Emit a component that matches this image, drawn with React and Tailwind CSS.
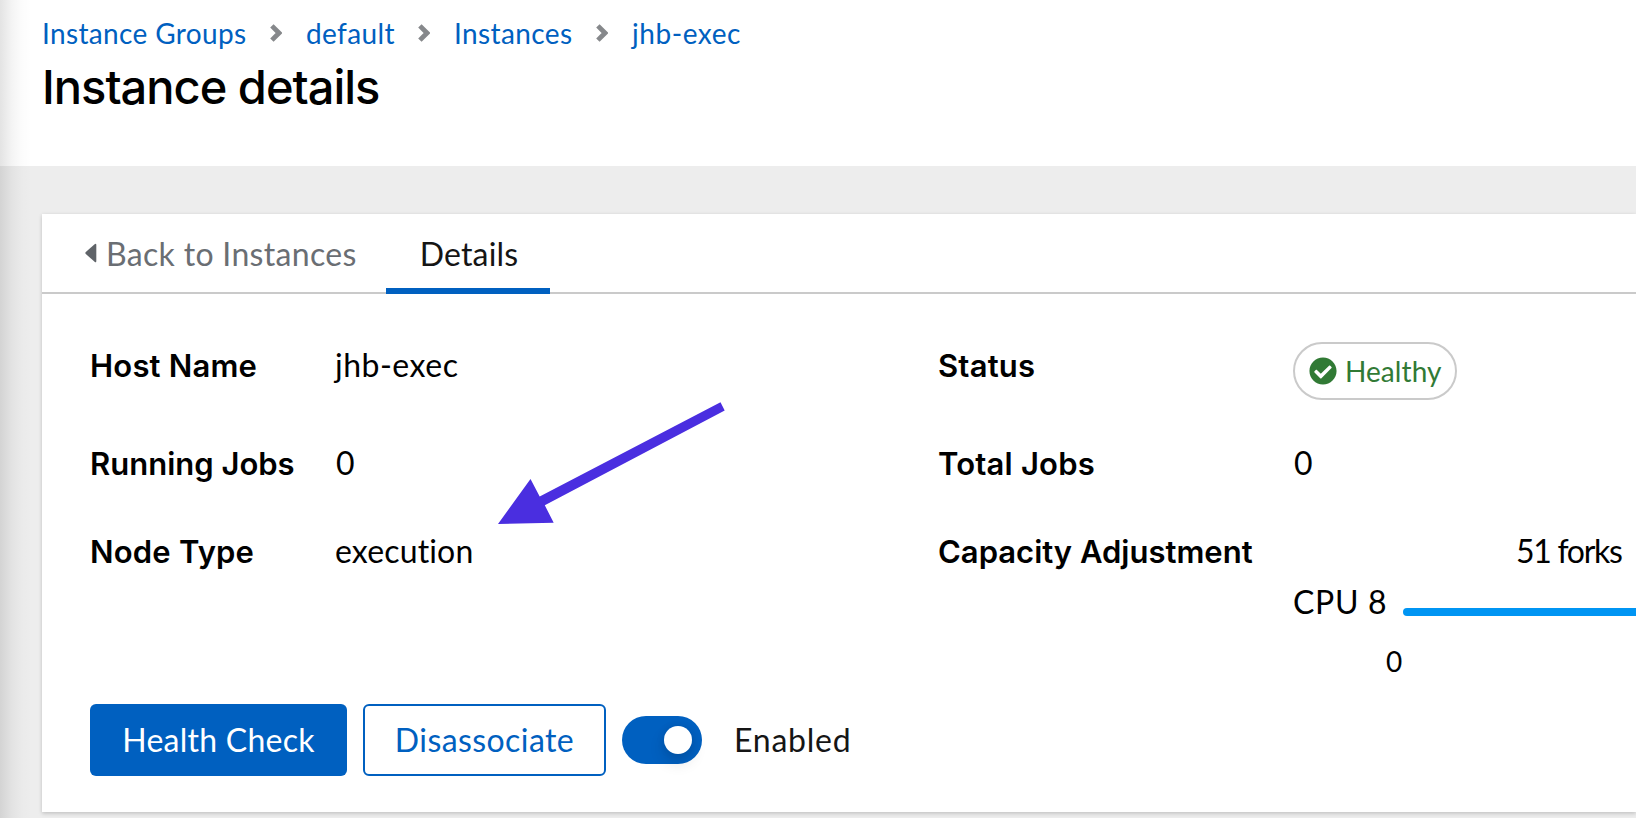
import React from 'react';

function Chevron() {
  return (
    <svg className="h-[18px] w-3 shrink-0" viewBox="0 0 12 18" fill="none">
      <path d="M1.900 1.900 9 9l-7.100 7.100" stroke="#86888b" strokeWidth="4.800" strokeLinejoin="miter" />
    </svg>
  );
}

function Breadcrumb() {
  return (
    <nav className="flex h-[42px] items-center text-[28px] leading-[42px] text-[#0060c0]">
      <a className="w-[228px] tracking-[0.35px]">Instance Groups</a>
      <Chevron />
      <a className="ml-6 w-[112px] tracking-[0.39px]">default</a>
      <Chevron />
      <a className="ml-6 w-[142px] tracking-[0.39px]">Instances</a>
      <Chevron />
      <a className="ml-6 tracking-[0.55px]">jhb-exec</a>
    </nav>
  );
}

function Label({ className = '', children }) {
  return (
    <dt className={`font-[Inter] text-[31px] leading-[48px] font-semibold whitespace-nowrap ${className}`}>
      {children}
    </dt>
  );
}

function Toggle() {
  return (
    <span className="ml-4 flex h-12 w-20 items-center justify-end rounded-full bg-[#0060c0] pr-2.5">
      <span className="h-7 w-7 rounded-full bg-white shadow-[0_8px_16px_0_rgba(3,3,3,0.14),0_0_8px_0_rgba(3,3,3,0.08)]" />
    </span>
  );
}

function Details() {
  return (
    <div className="grid grid-cols-[848px_1fr] pt-[47px] pl-12">
      <dl className="grid grid-cols-[245px_1fr] grid-rows-[98px_88px_177px] text-[32px] leading-[48px]">
        <div className="col-span-2 grid grid-cols-subgrid items-baseline">
          <Label className="tracking-[0.2px]">Host Name</Label>
          <dd className="tracking-[0.5px]">jhb-exec</dd>
        </div>
        <div className="col-span-2 grid grid-cols-subgrid items-baseline">
          <Label>Running Jobs</Label>
          <dd className="pl-px">0</dd>
        </div>
        <div className="col-span-2 grid grid-cols-subgrid items-baseline">
          <Label className="tracking-[0.2px]">Node Type</Label>
          <dd className="tracking-[0.15px]">execution</dd>
        </div>
      </dl>
      <dl className="grid grid-cols-[355px_1fr] grid-rows-[98px_88px_177px] text-[32px] leading-[48px]">
        <Label className="pt-px tracking-[0.2px]">Status</Label>
        <dd className="pt-px">
          <span className="flex h-[58px] w-[164px] items-center rounded-full border-2 border-[#cacaca] pl-3.5 text-[28px] tracking-[0.07px] text-[#317a35]">
            <svg className="mr-2 h-7 w-7 shrink-0" viewBox="0 0 512 512" fill="currentColor">
              <path d="M504 256c0 137-111 248-248 248S8 393 8 256 119 8 256 8s248 111 248 248zM227.300 387.300l184-184c6.200-6.200 6.200-16.400 0-22.600l-22.600-22.600c-6.200-6.200-16.400-6.200-22.600 0L216 308.100l-70.100-70.100c-6.200-6.200-16.400-6.200-22.600 0l-22.600 22.600c-6.200 6.200-6.200 16.400 0 22.600l104 104c6.200 6.300 16.400 6.300 22.600.1z" />
            </svg>
            Healthy
          </span>
        </dd>
        <Label className="pt-px tracking-[0.2px]">Total Jobs</Label>
        <dd className="pl-px">0</dd>
        <Label className="pt-px">Capacity Adjustment</Label>
        <dd>
          <div className="pl-[223px] tracking-[-1.3px] whitespace-nowrap">51 forks</div>
          <div className="mt-[3px] flex items-center">
            <span className="w-[110px] shrink-0 tracking-[0.67px] whitespace-nowrap">CPU 8</span>
            <span className="mt-5 h-2 w-full rounded-l-full bg-[#0095f3]" />
          </div>
          <div className="mt-3.5 pl-[93px] text-[28px] leading-[42px]">0</div>
        </dd>
      </dl>
    </div>
  );
}

export default function App() {
  return (
    <div className="relative flex h-[818px] w-[1636px] flex-col overflow-hidden bg-[#ededed] font-[Lato,sans-serif] text-black">
      <header className="h-[166px] shrink-0 bg-white pt-3 pl-[42px]">
        <Breadcrumb />
        <h1 className="mt-0.5 font-[Inter] text-[47px] leading-[62px] font-medium tracking-[-1px]">Instance details</h1>
      </header>
      <main className="pt-12 pl-[42px]">
        <section className="h-[598px] bg-white shadow-[0_2px_4px_rgba(3,3,3,0.14),0_0_4px_rgba(3,3,3,0.06)]">
          <div className="flex h-20 border-b-2 border-[#cacaca] text-[32px] leading-[48px]">
            <a className="flex w-[344px] items-start pt-[15px] pl-[43px] text-[#6a6e73]">
              <svg className="mt-[14px] mr-[9px] h-5 w-3 shrink-0" viewBox="0 0 12 20" fill="#5f6368">
                <path d="M11.300 2v16q0 2-1.700.7L.8 11Q-.2 10 .8 9l8.800-7.700Q11.300 0 11.300 2z" />
              </svg>
              <span className="pt-px tracking-[0.32px] whitespace-nowrap">Back to Instances</span>
            </a>
            <a className="h-20 w-[164px] border-b-6 border-[#0060c0] pt-4 pl-0.5 text-center tracking-[0.17px] text-[#151515]">Details</a>
          </div>
          <Details />
          <div className="flex h-[72px] items-center pl-12 text-[32px] leading-[48px]">
            <button className="h-[72px] w-[257px] rounded-md bg-[#0060c0] tracking-[0.25px] text-white">Health Check</button>
            <button className="ml-4 h-[72px] w-[243px] rounded-md border-2 border-[#0060c0] tracking-[0.42px] text-[#0060c0]">Disassociate</button>
            <Toggle />
            <span className="ml-8 tracking-[0.75px] text-[#151515]">Enabled</span>
          </div>
        </section>
      </main>
      <div className="pointer-events-none absolute inset-y-0 left-0 w-8 bg-[linear-gradient(to_right,rgba(3,3,3,0.11),rgba(3,3,3,0.045)_38%,rgba(3,3,3,0.01)_70%,transparent)]" />
      <svg className="pointer-events-none absolute top-[400px] left-[496px] h-[126px] w-[232px]" viewBox="496 400 232 126">
        <path d="M498 524 530.500 479 539.700 496.500 720.500 402.300 724.700 410.500 544.800 505.300 553.700 522.800z" fill="#4a2ee0" />
      </svg>
    </div>
  );
}
